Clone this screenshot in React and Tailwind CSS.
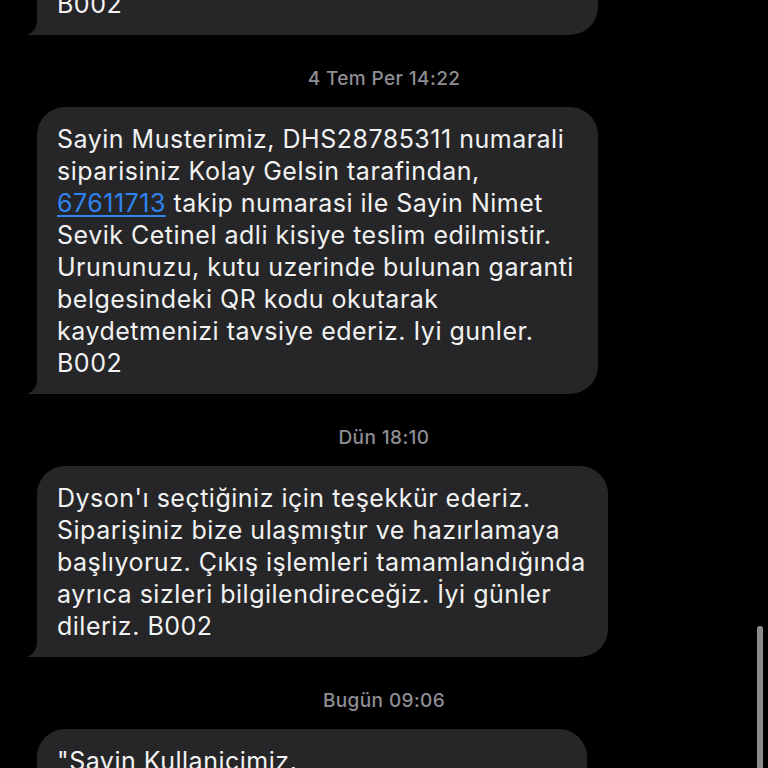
import React from "react";

const font = { fontFamily: "Inter, 'Noto Sans', sans-serif" };

const Tail = () => (
  <svg
    className="absolute left-[-10px] bottom-0"
    width="40"
    height="30"
    viewBox="0 0 40 30"
  >
    <path
      d="M10 0 H40 V30 H22 C15 30 7 30.6 0 30 C6 27.5 10 23 10 15 Z"
      fill="#262628"
    />
  </svg>
);

const Bubble = ({ width, lines, className = "" }) => (
  <div
    className={`relative ml-[37px] bg-[#262628] rounded-[28px] pl-[20px] pt-[16px] pb-[15px] text-[25px] leading-[32px] tracking-[0.5px] text-[#f2f2f2] ${width} ${className}`}
  >
    <Tail />
    <div className="relative">
      {lines.map((l, i) => (
        <div key={i} className="whitespace-nowrap">
          {l}
        </div>
      ))}
    </div>
  </div>
);

const Stamp = ({ children }) => (
  <div className="mt-[32px] mb-[16px] text-center text-[19px] leading-[24px] font-medium tracking-[0.4px] text-[#8e8e93]">
    {children}
  </div>
);

const deliveryLines = [
  "Sayin Musterimiz, DHS28785311 numarali",
  "siparisiniz Kolay Gelsin tarafindan,",
  <>
    <span className="text-[#2f84f0] underline underline-offset-[3px]">67611713</span> takip numarasi ile Sayin Nimet
  </>,
  "Sevik Cetinel adli kisiye teslim edilmistir.",
  "Urununuzu, kutu uzerinde bulunan garanti",
  "belgesindeki QR kodu okutarak",
  "kaydetmenizi tavsiye ederiz. Iyi gunler.",
  "B002",
];

export default function App() {
  return (
    <div className="relative h-[768px] w-[768px] overflow-hidden bg-black" style={font}>
      <div className="flex flex-col">
        <Bubble width="w-[561px]" lines={deliveryLines} className="mt-[-252px]" />
        <Stamp>4 Tem Per 14:22</Stamp>
        <Bubble width="w-[561px]" lines={deliveryLines} />
        <Stamp>Dün 18:10</Stamp>
        <Bubble
          width="w-[571px]"
          lines={[
            "Dyson'ı seçtiğiniz için teşekkür ederiz.",
            "Siparişiniz bize ulaşmıştır ve hazırlamaya",
            "başlıyoruz. Çıkış işlemleri tamamlandığında",
            "ayrıca sizleri bilgilendireceğiz. İyi günler",
            "dileriz. B002",
          ]}
        />
        <Stamp>Bugün 09:06</Stamp>
        <Bubble
          width="w-[550px]"
          lines={['"Sayin Kullanicimiz,', "Hesabiniza yeni bir giris yapildi."]}
        />
      </div>
      <div className="absolute left-[757px] top-[626px] h-[160px] w-[6px] rounded-full bg-[#8a8a8a]" />
    </div>
  );
}
